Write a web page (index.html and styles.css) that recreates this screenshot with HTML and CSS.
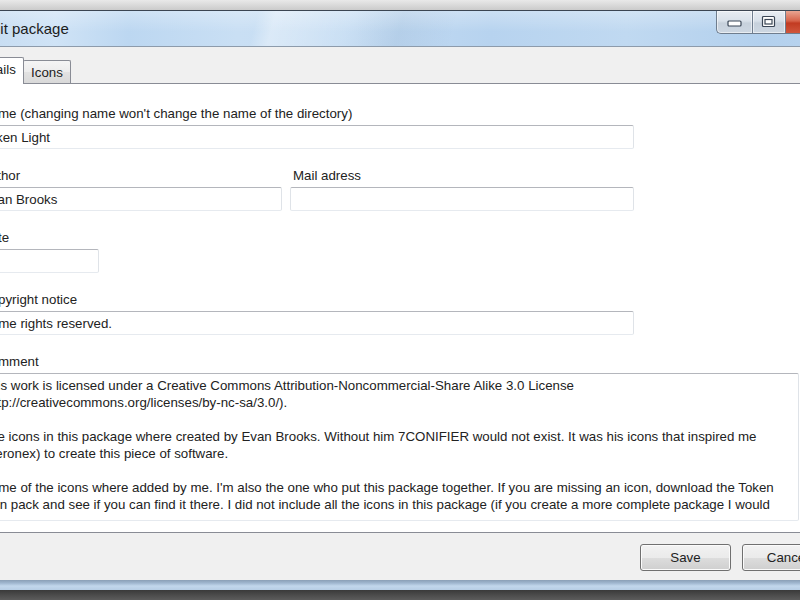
FILE: index.html
```html
<!DOCTYPE html>
<html lang="en">
<head>
<meta charset="utf-8">
<title>Edit package</title>
<link rel="stylesheet" href="styles.css">
</head>
<body>
<div class="screen">
  <div class="backdrop-top"></div>
  <div class="window">
    <div class="titlebar">
      <span class="title">Edit package</span>
      <div class="caption-buttons">
        <div class="cap cap-min">
          <svg width="16" height="7" viewBox="0 0 16 7"><rect x="1" y="1" width="13" height="5" rx="1" fill="#fff" stroke="#3a4656" stroke-width="1.2"/></svg>
        </div>
        <div class="cap cap-max">
          <svg width="16" height="14" viewBox="0 0 16 14"><rect x="1.5" y="1.5" width="12" height="10" rx="1" fill="#fff" stroke="#3a4656" stroke-width="1.2"/><rect x="4" y="4.5" width="7" height="4.5" fill="none" stroke="#3a4656" stroke-width="1.2"/></svg>
        </div>
        <div class="cap cap-close"></div>
      </div>
    </div>
    <div class="client">
      <div class="tabs">
        <div class="tab tab-active">Details</div>
        <div class="tab">Icons</div>
      </div>
      <div class="tabpage">
        <div class="group">
          <label class="label">Name (changing name won't change the name of the directory)</label>
          <input class="input w-wide" type="text" value="Token Light" readonly>
        </div>
        <div class="group row">
          <div class="col">
            <label class="label">Author</label>
            <input class="input w-author" type="text" value="Evan Brooks" readonly>
          </div>
          <div class="col">
            <label class="label">Mail adress</label>
            <input class="input w-mail" type="text" value="" readonly>
          </div>
        </div>
        <div class="group">
          <label class="label">Date</label>
          <input class="input w-small" type="text" value="" readonly>
        </div>
        <div class="group">
          <label class="label">Copyright notice</label>
          <input class="input w-wide" type="text" value="Some rights reserved." readonly>
        </div>
        <div class="group">
          <label class="label">Comment</label>
          <div class="textarea">
            <div class="line">This work is licensed under a Creative Commons Attribution-Noncommercial-Share Alike 3.0 License</div>
            <div class="line">(http://creativecommons.org/licenses/by-nc-sa/3.0/).</div>
            <div class="line">&nbsp;</div>
            <div class="line">The icons in this package where created by Evan Brooks. Without him 7CONIFIER would not exist. It was his icons that inspired me</div>
            <div class="line">(Xeronex) to create this piece of software.</div>
            <div class="line">&nbsp;</div>
            <div class="line">Some of the icons where added by me. I'm also the one who put this package together. If you are missing an icon, download the Token</div>
            <div class="line">Icon pack and see if you can find it there. I did not include all the icons in this package (if you create a more complete package I would</div>
          </div>
        </div>
      </div>
      <div class="buttons">
        <button class="btn" type="button">Save</button>
        <button class="btn" type="button">Cancel</button>
      </div>
    </div>
    <div class="frame-bottom"></div>
  </div>
  <div class="backdrop-bottom"></div>
</div>
</body>
</html>
```

FILE: styles.css
```css
* { box-sizing: border-box; }
html, body { margin: 0; padding: 0; }
body {
  width: 800px;
  height: 600px;
  overflow: hidden;
  background: #4a4a4a;
  font-family: "Liberation Sans", Arial, sans-serif;
  font-size: 13.3px;
  color: #222;
}
.screen {
  width: 800px;
  height: 600px;
  overflow: hidden;
  display: flex;
  flex-direction: column;
}
.backdrop-top {
  flex: none;
  height: 10px;
  background: linear-gradient(#e9e9e9, #cbcbcb);
}
.window {
  flex: none;
  margin-left: -53px;
  width: 906px;
  border-top: 1px solid #3b4552;
}
.titlebar {
  height: 36px;
  display: flex;
  justify-content: space-between;
  align-items: flex-start;
  border-bottom: 1px solid #8d9bab;
  background:
    linear-gradient(180deg, rgba(255,255,255,0.28), rgba(255,255,255,0) 60%),
    linear-gradient(105deg, rgba(255,255,255,0) 0%, rgba(255,255,255,0) 34%, rgba(255,255,255,0.35) 36%, rgba(255,255,255,0.1) 44%, rgba(0,40,90,0.06) 50%, rgba(255,255,255,0) 56%, rgba(255,255,255,0) 100%),
    linear-gradient(90deg, #c2d9ef 0%, #cfe3f6 12%, #bcd7f1 20%, #c9dff4 32%, #c4dcf3 45%, #b7d3ef 60%, #c0d9f1 75%, #b3d0ed 90%, #bbd5ef 100%);
}
.title {
  padding-left: 35px;
  line-height: 35px;
  font-size: 15px;
  color: #1c1c1c;
}
.caption-buttons {
  display: flex;
  margin-right: 20px;
}
.cap {
  height: 23px;
  display: flex;
  align-items: center;
  justify-content: center;
  border: 1px solid #6f7d8e;
  border-top: none;
}
.cap-min {
  width: 36px;
  border-right: none;
  border-bottom-left-radius: 5px;
  padding-top: 3px;
  background: linear-gradient(#e8edf3 0%, #d9e1ea 45%, #c7d1dc 55%, #cdd7e2 100%);
  box-shadow: inset 0 0 0 1px rgba(255,255,255,0.55);
}
.cap-max {
  width: 34px;
  background: linear-gradient(#e8edf3 0%, #d9e1ea 45%, #c7d1dc 55%, #cdd7e2 100%);
  box-shadow: inset 0 0 0 1px rgba(255,255,255,0.55);
}
.cap-close {
  width: 47px;
  border-left: none;
  border-bottom-right-radius: 5px;
  background: linear-gradient(#e9a592 0%, #d6634a 45%, #c23b22 55%, #d0563c 100%);
}
.client {
  background: #f0f0f0;
  padding: 10px 20px 9px 20px;
}
.tabs {
  height: 26px;
  display: flex;
  align-items: flex-end;
}
.tab {
  height: 23px;
  width: 48px;
  padding-top: 3px;
  line-height: 18px;
  text-align: center;
  border: 1px solid #898c95;
  border-bottom: none;
  border-radius: 2px 2px 0 0;
  background: linear-gradient(#f5f5f5 0%, #ececec 50%, #e2e2e2 51%, #d9d9d9 100%);
  color: #222;
}
.tab-active {
  height: 27px;
  width: 57px;
  margin-bottom: -1px;
  margin-right: -1px;
  position: relative;
  z-index: 1;
  background: #ffffff;
}
.tabpage {
  background: #ffffff;
  border: 1px solid #898c95;
  padding: 22px 0 11px 10px;
}
.group + .group { margin-top: 19px; }
.group { display: flex; flex-direction: column; }
.row { flex-direction: row; gap: 8px; }
.col { display: flex; flex-direction: column; }
.label {
  display: block;
  height: 16px;
  line-height: 16px;
  margin-bottom: 3px;
  padding-left: 3px;
  color: #222;
}
.col + .col .label { padding-left: 3px; }
.input {
  display: block;
  height: 24px;
  margin: 0;
  padding: 0 3px;
  font-family: "Liberation Sans", Arial, sans-serif;
  font-size: 13.3px;
  color: #222;
  background: #fff;
  border: 1px solid;
  border-color: #b4b6bc #dfe3e8 #e6eaef #dfe3e8;
  border-radius: 2px;
  outline: none;
}
.w-wide { width: 656px; }
.w-author { width: 304px; }
.w-mail { width: 344px; }
.w-small { width: 121px; }
.textarea {
  width: 821px;
  height: 148px;
  padding: 3px 3px;
  background: #fff;
  border: 1px solid;
  border-color: #b4b6bc #dfe3e8 #e6eaef #d6d9de;
  border-radius: 2px;
  overflow: hidden;
}
.line {
  line-height: 17px;
  white-space: nowrap;
  color: #222;
}
.buttons {
  display: flex;
  justify-content: flex-end;
  gap: 11px;
  margin-top: 11px;
}
.btn {
  width: 91px;
  height: 27px;
  margin: 0;
  padding: 0;
  font-family: "Liberation Sans", Arial, sans-serif;
  font-size: 13.3px;
  color: #222;
  border: 1px solid #707070;
  border-radius: 3px;
  background: linear-gradient(#f2f2f2 0%, #ebebeb 50%, #dddddd 51%, #cfcfcf 100%);
  box-shadow: inset 0 0 0 1px #fbfbfb;
}
.frame-bottom {
  height: 10px;
  background: linear-gradient(#8a9fb6 0%, #9fb6cf 30%, #c2d7ec 60%, #b6cde4 100%);
}
.backdrop-bottom {
  flex: 1;
  background: linear-gradient(#3a3a3a, #5c5c5c);
}
```
